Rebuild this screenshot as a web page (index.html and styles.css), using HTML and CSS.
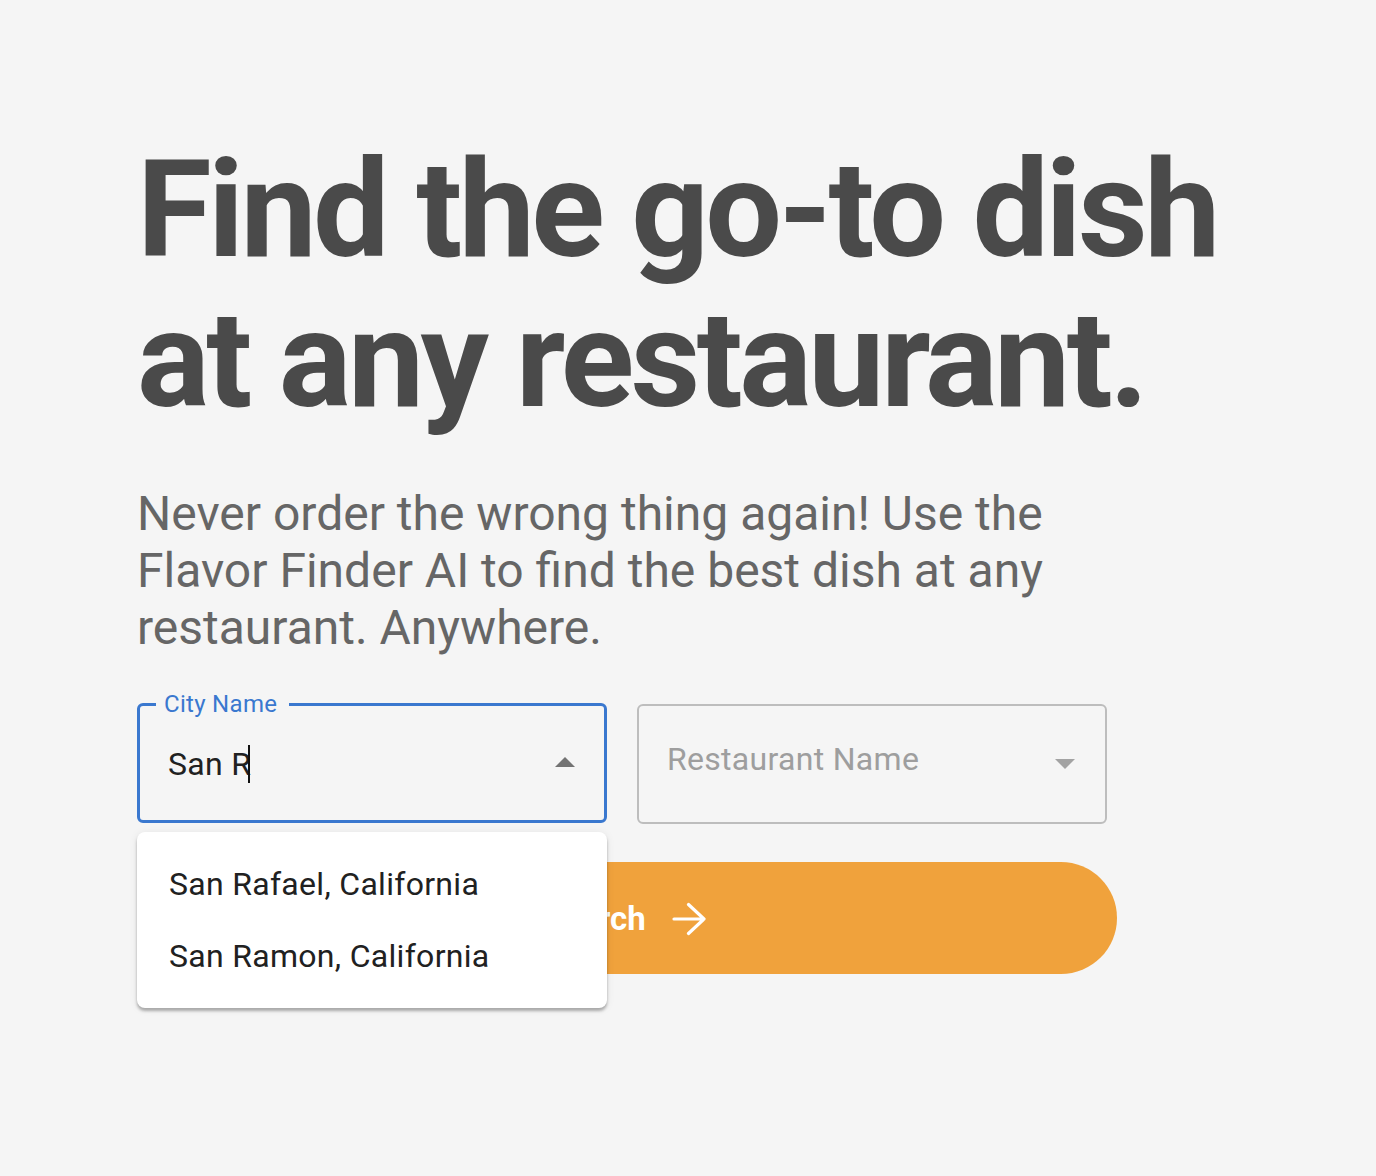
FILE: index.html
```html
<!DOCTYPE html>
<html lang="en">
<head>
<meta charset="utf-8">
<title>Flavor Finder</title>
<link rel="stylesheet" href="styles.css">
</head>
<body>
<main class="hero">
  <h1 class="title">Find the go-to dish<br>at any restaurant.</h1>
  <p class="lead">Never order the wrong thing again! Use the Flavor Finder AI to find the best dish at any restaurant. Anywhere.</p>
  <form class="search">
    <div class="fields">
      <div class="field-wrap">
        <fieldset class="field field--focused">
          <legend class="field-label">City Name</legend>
          <div class="field-body">
            <span class="field-value">San R<span class="caret"></span></span>
            <svg class="field-arrow field-arrow--up" viewBox="0 0 20 10" width="20" height="10"><path d="M0 10 L10 0 L20 10 Z"/></svg>
          </div>
        </fieldset>
        <ul class="options">
          <li class="option">San Rafael, California</li>
          <li class="option">San Ramon, California</li>
        </ul>
      </div>
      <fieldset class="field">
        <div class="field-body">
          <span class="field-placeholder">Restaurant Name</span>
          <svg class="field-arrow field-arrow--down" viewBox="0 0 20 10" width="20" height="10"><path d="M0 0 L20 0 L10 10 Z"/></svg>
        </div>
      </fieldset>
    </div>
    <button type="button" class="search-btn">
      <span>Search</span>
      <svg class="search-icon" viewBox="0 0 34 34" width="34" height="34"><path d="M2 17 H32 M16.5 2.5 L32 17 L16.5 31.5" fill="none" stroke="#fff" stroke-width="3.2" stroke-linecap="round" stroke-linejoin="round"/></svg>
    </button>
  </form>
</main>
</body>
</html>
```

FILE: styles.css
```css
* { box-sizing: border-box; }
html, body { margin: 0; padding: 0; }
body {
  background: #f5f5f5;
  font-family: Roboto, "Liberation Sans", sans-serif;
  min-height: 1176px;
}
.hero {
  padding: 135px 0 0 137px;
  width: 1200px;
}
.title {
  margin: 0;
  font-size: 136px;
  line-height: 150px;
  font-weight: 700;
  color: #4a4a4a;
  letter-spacing: -3.6px;
  white-space: nowrap;
}
.lead {
  margin: 50px 0 0;
  width: 920px;
  font-size: 48px;
  line-height: 57px;
  color: #666;
  font-weight: 400;
}
.search { margin-top: 48px; width: 980px; }
.fields {
  display: flex;
  align-items: flex-start;
  gap: 30px;
}
.field-wrap { position: relative; }
.field {
  margin: 0;
  width: 470px;
  height: 120px;
  border: 2px solid #bdbdbd;
  border-radius: 6px;
  padding: 0 30px 0 28px;
  display: flex;
  align-items: center;
}
.field--focused {
  border: 3px solid #3a78cf;
  height: 133px;
  margin-top: -14px;
  padding: 0 29px 0 28px;
}
.field-label {
  margin-left: -12px;
  padding: 0 12px 0 8px;
  font-size: 24px;
  line-height: 28px;
  letter-spacing: 0.3px;
  color: #3a78cf;
}
.field-body {
  flex: 1;
  display: flex;
  align-items: center;
  justify-content: space-between;
  height: 100%;
}
.field--focused .field-body { height: auto; padding-bottom: 14px; }
.field-value {
  font-size: 32px;
  letter-spacing: 0.3px;
  color: #212121;
  display: inline-flex;
  align-items: center;
  margin-top: 4px;
}
.caret {
  display: inline-block;
  width: 2px;
  height: 38px;
  background: #111;
  margin-left: -3px;
}
.field-placeholder {
  font-size: 32px;
  letter-spacing: 0.3px;
  color: #9e9e9e;
  margin-top: -10px;
}
.field-arrow--up { fill: #737373; }
.field-arrow--down { fill: #a3a3a3; }
.options {
  position: absolute;
  left: 0;
  top: 128px;
  width: 470px;
  margin: 0;
  padding: 16px 0;
  list-style: none;
  background: #fff;
  border-radius: 8px;
  box-shadow: 0 3px 3px rgba(0,0,0,0.28), 0 1px 8px rgba(0,0,0,0.08);
  z-index: 2;
}
.option {
  padding: 12px 32px;
  font-size: 32px;
  line-height: 48px;
  letter-spacing: 0.3px;
  color: #212121;
}
.search-btn {
  margin-top: 38px;
  width: 980px;
  height: 112px;
  border: 0;
  border-radius: 56px;
  background: #f0a23c;
  color: #fff;
  font-family: Roboto, "Liberation Sans", sans-serif;
  font-weight: 700;
  font-size: 33px;
  display: flex;
  align-items: center;
  justify-content: center;
  gap: 26px;
  padding: 0 6px 0 0;
}
.search-icon { display: block; margin-top: 2px; }
```
